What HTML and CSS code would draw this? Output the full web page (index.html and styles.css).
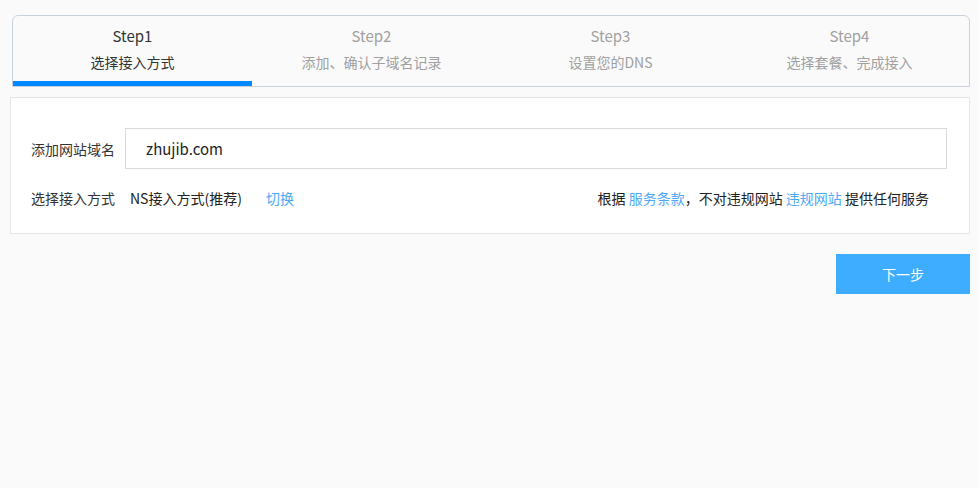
FILE: index.html
```html
<!DOCTYPE html>
<html lang="zh-CN">
<head>
    <meta charset="UTF-8">
    <meta name="viewport" content="width=device-width, initial-scale=1.0">
    <title>添加网站</title>
    <link rel="stylesheet" href="styles.css">
</head>
<body>
    <div class="steps">
        <div class="step active">
            <div class="step-title">Step1</div>
            <div class="step-desc">选择接入方式</div>
        </div>
        <div class="step">
            <div class="step-title">Step2</div>
            <div class="step-desc">添加、确认子域名记录</div>
        </div>
        <div class="step">
            <div class="step-title">Step3</div>
            <div class="step-desc">设置您的DNS</div>
        </div>
        <div class="step">
            <div class="step-title">Step4</div>
            <div class="step-desc">选择套餐、完成接入</div>
        </div>
    </div>

    <div class="card">
        <div class="row">
            <label class="label" for="domain">添加网站域名</label>
            <input type="text" id="domain" class="input" value="zhujib.com">
        </div>
        <div class="row row-mode">
            <span class="label label-mode">选择接入方式</span>
            <span class="mode">NS接入方式(推荐)</span>
            <a class="link switch" href="#">切换</a>
            <span class="notice">根据 <a class="link" href="#">服务条款</a>，不对违规网站 <a class="link" href="#">违规网站</a> 提供任何服务</span>
        </div>
    </div>

    <div class="actions">
        <button class="next">下一步</button>
    </div>
</body>
</html>
```

FILE: styles.css
```css
body {
    font-family: "Noto Sans CJK SC", "Noto Sans", sans-serif;
    font-size: 14px;
    background-color: #fafafa;
    color: #333;
    margin: 0;
    padding: 15px 9px 0 10px;
}

/* step header */
.steps {
    display: flex;
    margin-left: 2px;
    border: 1px solid #c9d0de;
    border-radius: 6px 6px 0 0;
    background-color: #fafafa;
}

.step {
    flex: 1;
    height: 55px;
    padding-top: 10px;
    border-bottom: 5px solid transparent;
    text-align: center;
    color: #a0a0a0;
}

.step.active {
    border-bottom-color: #0088ff;
    color: #333;
}

.step-title {
    font-size: 15px;
    line-height: 20px;
}

.step-desc {
    font-size: 14px;
    line-height: 20px;
    margin-top: 6px;
}

/* form card */
.card {
    margin-top: 10px;
    background-color: #fff;
    border: 1px solid #e6e6e6;
    padding: 30px 22px 25px 20px;
}

.row {
    display: flex;
    align-items: center;
}

.label {
    width: 94px;
    flex-shrink: 0;
    line-height: 20px;
}

.input {
    flex: 1;
    height: 41px;
    box-sizing: border-box;
    border: 1px solid #d9d9d9;
    padding: 0 20px;
    font-family: inherit;
    font-size: 15px;
    color: #222;
    outline: none;
}

.row-mode {
    margin-top: 19px;
    line-height: 20px;
}

.label-mode {
    width: 99px;
}

.mode {
    color: #222;
}

.link {
    color: #4ea9f5;
    text-decoration: none;
}

.switch {
    margin-left: 24px;
}

.notice {
    margin-left: auto;
    margin-right: 18px;
    color: #222;
}

/* footer button */
.actions {
    display: flex;
    justify-content: flex-end;
    margin-top: 20px;
}

.next {
    width: 134px;
    height: 40px;
    border: none;
    outline: none;
    cursor: pointer;
    background-color: #3eadff;
    color: #fff;
    font-family: inherit;
    font-size: 14px;
}
```
